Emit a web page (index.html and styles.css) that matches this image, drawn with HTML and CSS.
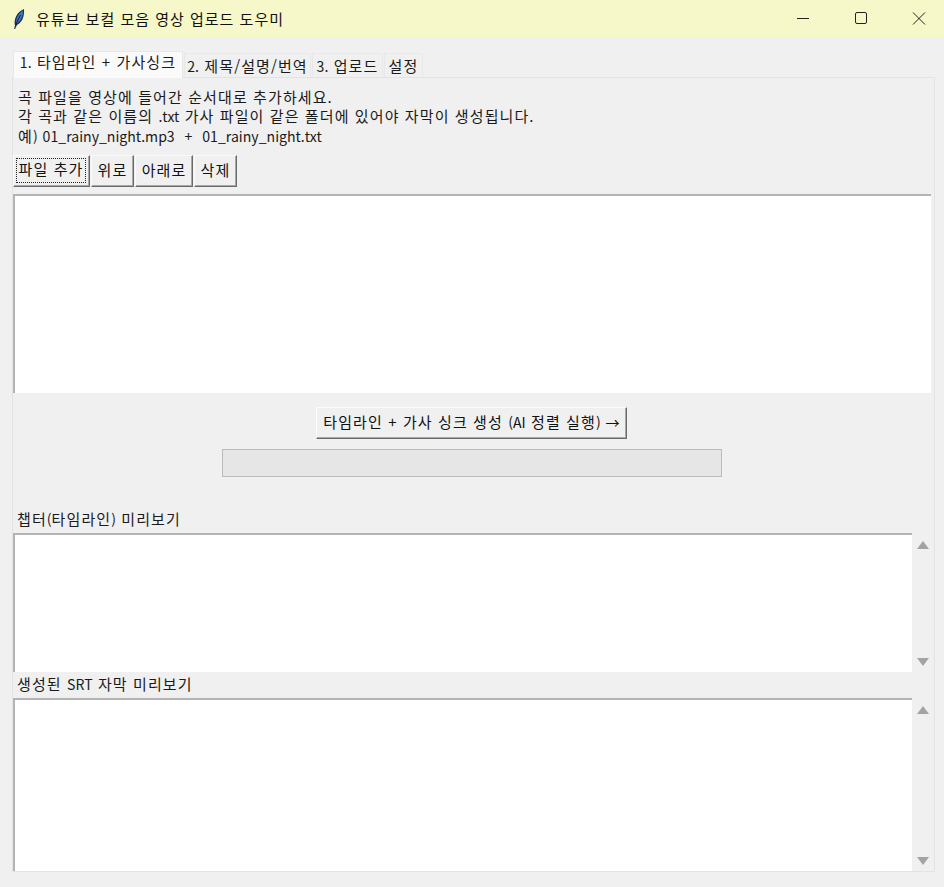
FILE: index.html
```html
<!DOCTYPE html>
<html lang="ko">
<head>
    <meta charset="UTF-8">
    <meta name="viewport" content="width=device-width, initial-scale=1.0">
    <title>유튜브 보컬 모음 영상 업로드 도우미</title>
    <link rel="stylesheet" href="styles.css">
</head>
<body>
    <!-- Title bar -->
    <div class="titlebar">
        <svg class="app-icon" width="14" height="22" viewBox="0 0 14 22">
            <path d="M2 21L3 17.500C1.500 13 4 4 12 1C12.500 7 11 14 5 17L3 21Z" fill="#1d3050"/>
            <path d="M4 16C3.500 12 5.500 6 11 2.500C11 7.500 9.500 13 4 16Z" fill="#3f78c4"/>
            <path d="M3.500 17L8.500 7" stroke="#101a2c" stroke-width="1" fill="none"/>
        </svg>
        <span class="window-title">유튜브 보컬 모음 영상 업로드 도우미</span>
        <div class="window-controls">
            <svg width="58" height="37" viewBox="0 0 58 37"><path d="M23 18.500H35" stroke="#222" stroke-width="1"/></svg>
            <svg width="58" height="37" viewBox="0 0 58 37"><rect x="23.500" y="12.500" width="11" height="11" rx="1.500" fill="none" stroke="#222" stroke-width="1"/></svg>
            <svg width="58" height="37" viewBox="0 0 58 37"><path d="M23 12.500L35 24.500M35 12.500L23 24.500" stroke="#222" stroke-width="1"/></svg>
        </div>
    </div>

    <div class="content">
        <!-- Tabs -->
        <div class="tabs">
            <div class="tab tab-active"><span class="latin">1.</span> 타임라인 + 가사싱크</div>
            <div class="tab tab-second"><span class="latin">2.</span> 제목/설명/번역</div>
            <div class="tab tab-third"><span class="latin">3.</span> 업로드</div>
            <div class="tab tab-fourth">설정</div>
        </div>

        <div class="panel">
            <div class="intro">
                <p>곡 파일을 영상에 들어간 순서대로 추가하세요.</p>
                <p>각 곡과 같은 이름의 <span class="latin">.txt</span> 가사 파일이 같은 폴더에 있어야 자막이 생성됩니다.</p>
                <p>예<span class="latin">) 01_rainy_night.mp3 &nbsp;+ &nbsp;01_rainy_night.txt</span></p>
            </div>

            <div class="toolbar">
                <button class="btn btn-add"><span class="focus-ring">파일 추가</span></button>
                <button class="btn btn-up">위로</button>
                <button class="btn btn-down">아래로</button>
                <button class="btn btn-delete">삭제</button>
            </div>

            <div class="file-list"></div>

            <div class="run-area">
                <button class="btn btn-run">타임라인 + 가사 싱크 생성 <span class="latin">(AI</span> 정렬 실행<span class="latin">) →</span></button>
                <div class="progress"></div>
            </div>

            <div class="section-label label-chapter">챕터<span class="latin">(</span>타임라인<span class="latin">)</span> 미리보기</div>
            <div class="preview preview-chapter">
                <div class="preview-text"></div>
                <div class="scrollbar">
                    <span class="arrow-up"></span>
                    <span class="arrow-down"></span>
                </div>
            </div>

            <div class="section-label label-srt">생성된 <span class="latin">SRT</span> 자막 미리보기</div>
            <div class="preview preview-srt">
                <div class="preview-text"></div>
                <div class="scrollbar">
                    <span class="arrow-up"></span>
                    <span class="arrow-down"></span>
                </div>
            </div>
        </div>
    </div>
</body>
</html>
```

FILE: styles.css
```css
* {
    margin: 0;
    padding: 0;
    box-sizing: border-box;
    font-family: "Noto Sans CJK KR", "Noto Sans", "Liberation Sans", sans-serif;
}

body {
    background-color: #f0f0f0;
    height: 887px;
    overflow: hidden;
    color: #1a1a1a;
    font-size: 15px;
    letter-spacing: 1.1px;
}

.latin {
    font-size: 14.1px;
    letter-spacing: 0;
    word-spacing: 1px;
}

.titlebar {
    height: 37px;
    background-color: #f7f8c9;
    display: flex;
    align-items: center;
    padding-left: 12px;
}

.app-icon {
    margin-right: 10px;
}

.window-title {
    color: #111;
    letter-spacing: 1px;
}

.window-controls {
    margin-left: auto;
    display: flex;
    margin-right: -4px;
}

.content {
    padding: 14px 9px 0 12px;
}

.tabs {
    display: flex;
    align-items: flex-end;
    height: 26px;
    padding-left: 1px;
}

.tab {
    height: 24px;
    background-color: #f0f0f0;
    border: 1px solid #e8e8e8;
    border-bottom: none;
    margin-right: 1px;
    line-height: 24px;
    text-align: center;
    white-space: nowrap;
}

.tab-active {
    width: 170px;
    height: 27px;
    margin-bottom: -1px;
    position: relative;
    background-color: #fafafa;
    line-height: 20px;
}

.tab-second {
    width: 127px;
}

.tab-third {
    width: 71px;
}

.tab-fourth {
    width: 39px;
    margin-right: 0;
}

.panel {
    height: 795px;
    border: 1px solid #e3e3e3;
}

.intro {
    padding: 9px 0 0 5px;
    height: 67px;
    line-height: 19px;
}

.toolbar {
    display: flex;
    margin-top: 10px;
    gap: 1px;
    height: 32px;
}

.btn {
    background-color: #f0f0f0;
    border: 1px solid;
    border-color: #fbfbfb #6a6a6a #6a6a6a #fbfbfb;
    box-shadow: inset -1px -1px 0 #a8a8a8;
    padding-bottom: 3px;
    font-size: 15px;
    letter-spacing: 1.1px;
    color: #111;
    white-space: nowrap;
}

.btn-add {
    width: 77px;
    padding: 2px 3px 3px 2px;
}

.focus-ring {
    display: block;
    height: 100%;
    line-height: 22px;
    outline: 1px dotted #222;
    outline-offset: -1px;
}

.btn-up {
    width: 43px;
}

.btn-down {
    width: 58px;
}

.btn-delete {
    width: 43px;
}

.file-list {
    height: 199px;
    width: 918px;
    margin-top: 7px;
    background-color: #fff;
    border-top: 2px solid #b4b4b4;
    border-left: 2px solid #b4b4b4;
}

.run-area {
    display: flex;
    flex-direction: column;
    align-items: center;
    padding: 14px 4px 0 0;
    height: 116px;
}

.btn-run {
    width: 311px;
    height: 32px;
}

.progress {
    width: 500px;
    height: 28px;
    margin-top: 10px;
    background-color: #e6e6e6;
    border: 1px solid #bcbcbc;
}

.section-label {
    padding-left: 4px;
    line-height: 20px;
    height: 24px;
}

.preview {
    display: flex;
}

.preview-chapter {
    height: 139px;
}

.label-srt {
    height: 26px;
    line-height: 24px;
}

.preview-srt {
    height: 173px;
}

.preview-text {
    width: 899px;
    background-color: #fff;
    border-top: 2px solid #b4b4b4;
    border-left: 2px solid #b4b4b4;
}

.scrollbar {
    flex: 1;
    display: flex;
    flex-direction: column;
    justify-content: space-between;
    align-items: center;
    padding: 8px 0 6px;
}

.arrow-up {
    width: 0;
    height: 0;
    border-left: 6px solid transparent;
    border-right: 6px solid transparent;
    border-bottom: 8px solid #a3a3a3;
}

.arrow-down {
    width: 0;
    height: 0;
    border-left: 6px solid transparent;
    border-right: 6px solid transparent;
    border-top: 8px solid #a3a3a3;
}
```
